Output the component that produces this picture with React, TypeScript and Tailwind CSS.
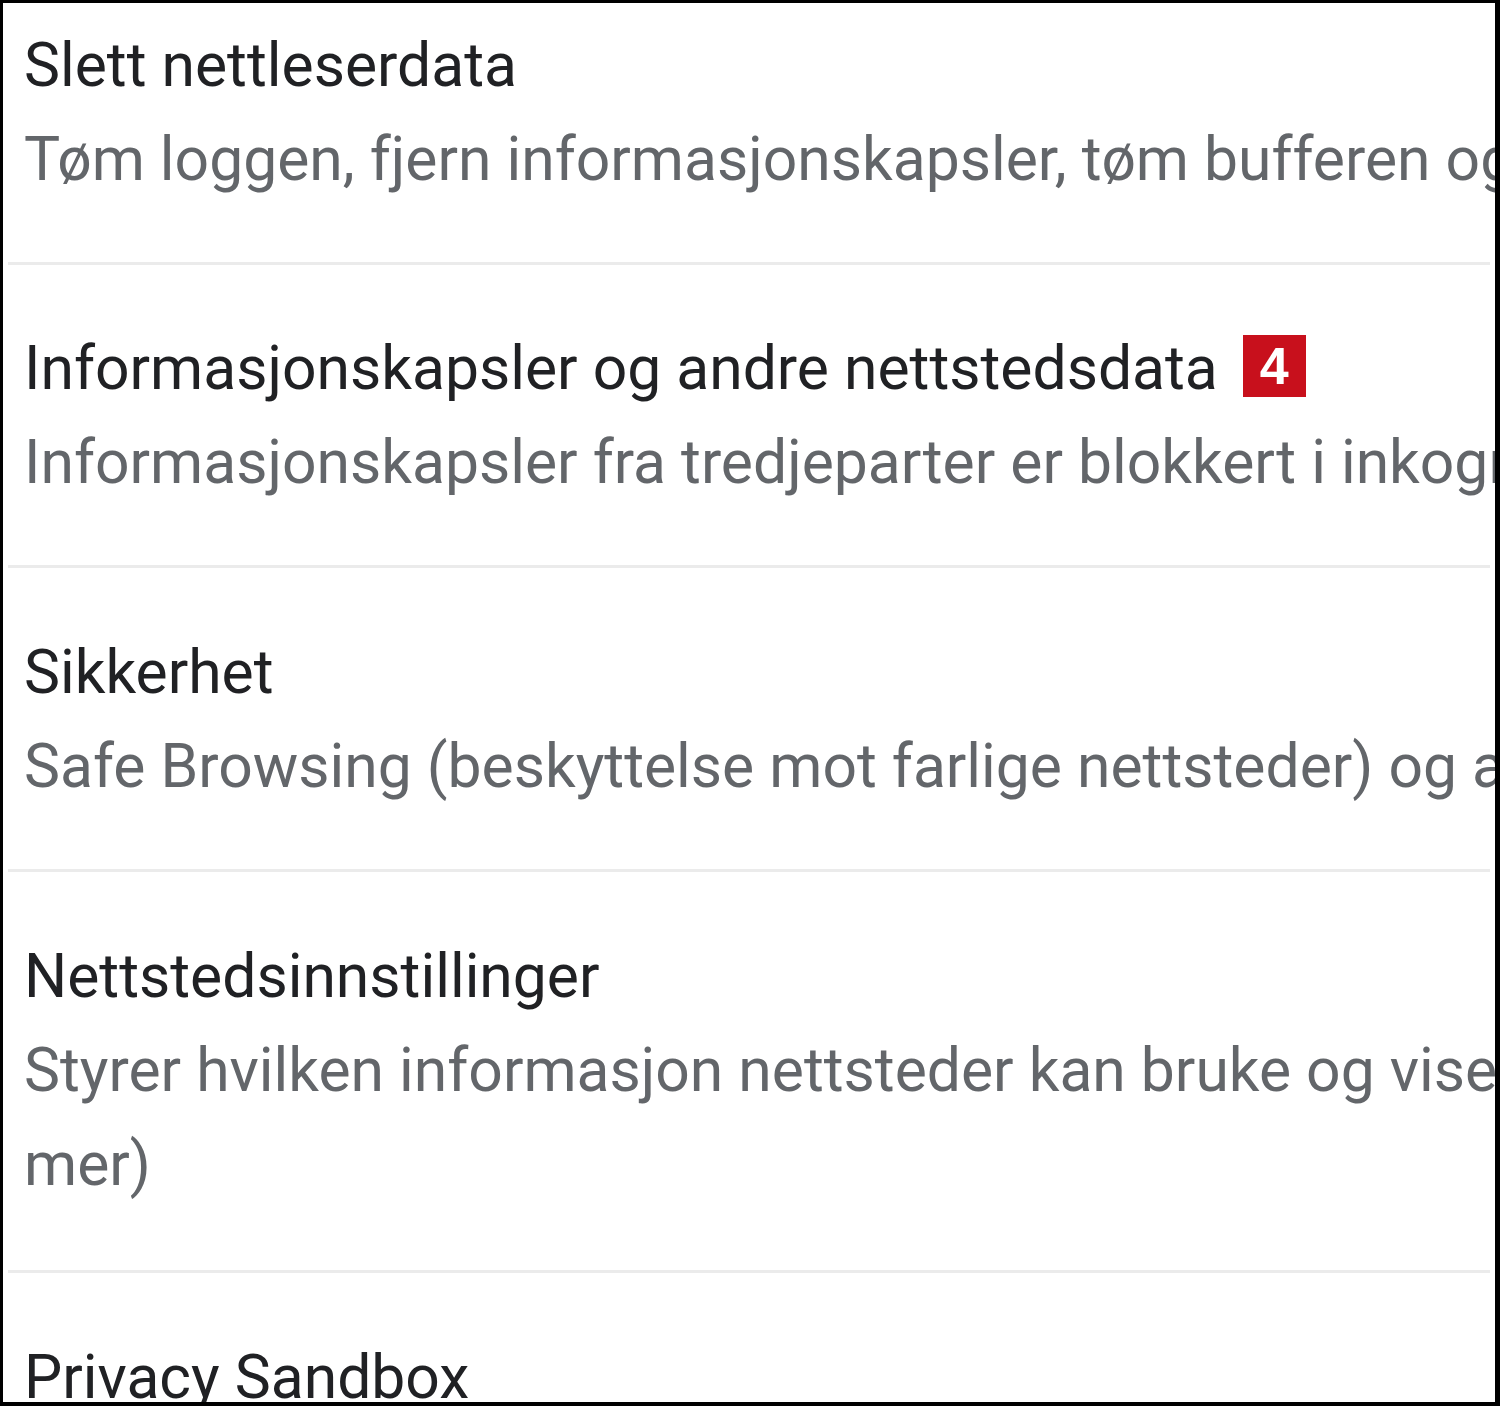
import React from "react";

const Sep = () => <div className="mx-[5px] h-[3px] bg-[#ebebeb]" />;

function Row({
  title,
  lines,
  badge,
  pad,
}: {
  title: string;
  lines: string[];
  badge?: string;
  pad: string;
}) {
  return (
    <div className={`${pad} pl-[21px]`}>
      <div className="flex items-center whitespace-nowrap text-[60.6px] leading-[94px] text-[#202124]">
        <span>{title}</span>
        {badge && (
          <span className="mb-[6px] ml-[25px] flex h-[62px] w-[63px] items-center justify-center bg-[#c8101c] text-[52px] font-bold leading-none text-white [font-family:'Liberation_Sans',Arial,sans-serif]">
            {badge}
          </span>
        )}
      </div>
      {lines.map((l, i) => (
        <div key={i} className="whitespace-nowrap text-[60.6px] leading-[94px] text-[#63666a]">
          {l}
        </div>
      ))}
    </div>
  );
}

export default function App() {
  return (
    <div className="h-[1406px] w-[1500px] overflow-hidden bg-white [font-family:Roboto,'Noto_Sans',sans-serif]">
      <div className="h-full w-full overflow-hidden border-l-[3px] border-t-[3px] border-r-[5px] border-b-[4px] border-black">
        <Row
          pad="pt-[16px] pb-[55px]"
          title="Slett nettleserdata"
          lines={["Tøm loggen, fjern informasjonskapsler, tøm bufferen og mer"]}
        />
        <Sep />
        <Row
          pad="pt-[57px] pb-[55px]"
          title="Informasjonskapsler og andre nettstedsdata"
          badge="4"
          lines={["Informasjonskapsler fra tredjeparter er blokkert i inkognitomodus"]}
        />
        <Sep />
        <Row
          pad="pt-[58px] pb-[55px]"
          title="Sikkerhet"
          lines={["Safe Browsing (beskyttelse mot farlige nettsteder) og andre sikkerhetsinnstillinger"]}
        />
        <Sep />
        <Row
          pad="pt-[58px] pb-[58px]"
          title="Nettstedsinnstillinger"
          lines={[
            "Styrer hvilken informasjon nettsteder kan bruke og vise (plassering, kamera, forgrunnsvinduer med",
            "mer)",
          ]}
        />
        <Sep />
        <Row pad="pt-[58px] pb-[55px]" title="Privacy Sandbox" lines={["Prøvefunksjoner er slått av"]} />
      </div>
    </div>
  );
}
